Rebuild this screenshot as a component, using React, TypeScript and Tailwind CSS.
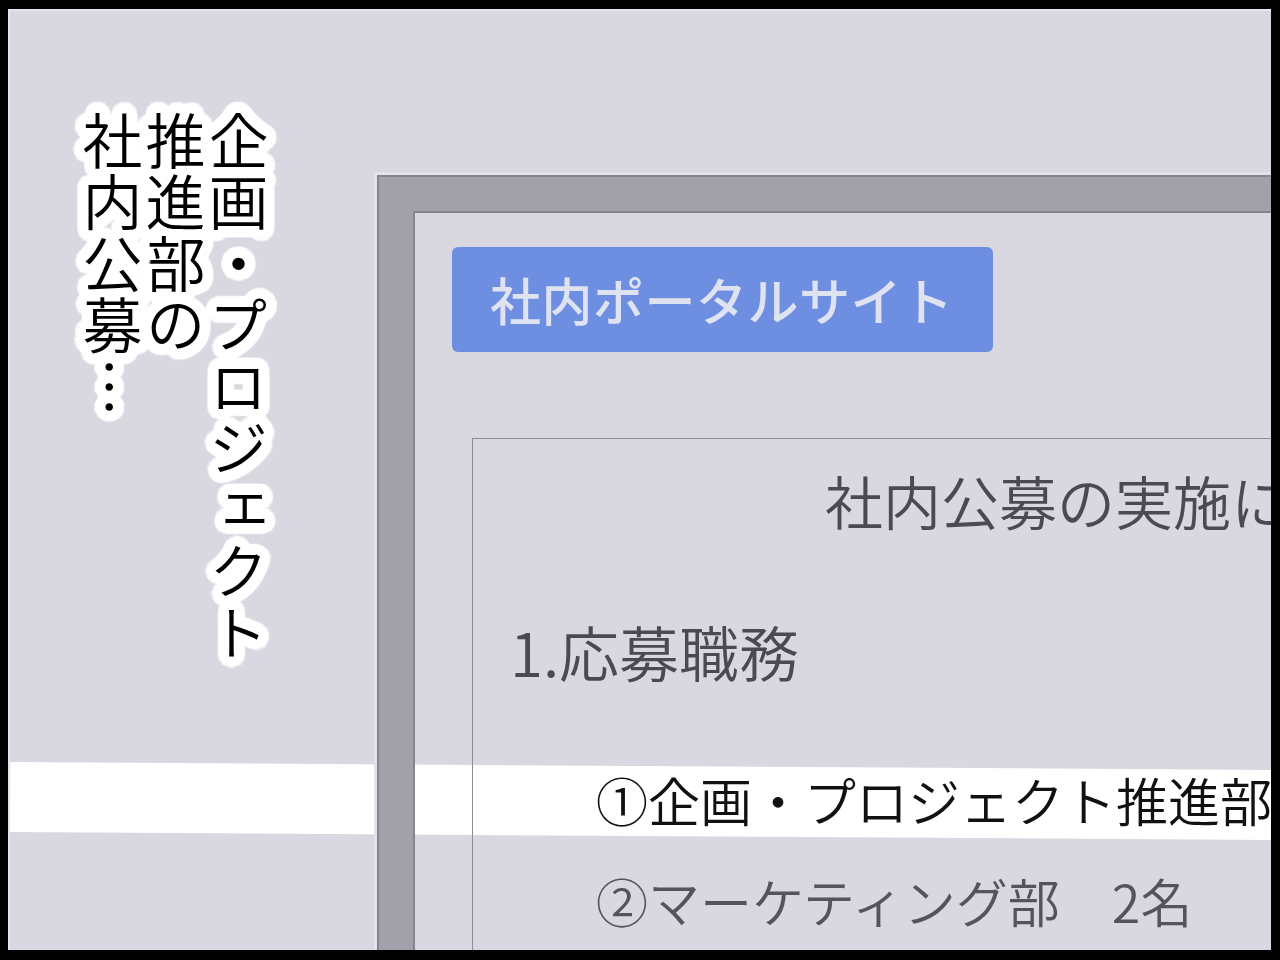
export default function App() {
  return (
    <div className="w-[1280px] h-[960px] bg-black pt-[9px] pl-[8px] pr-[9px] pb-[10px] font-['Noto_Sans_CJK_JP',sans-serif]">
      <div className="relative flex items-start h-full overflow-hidden bg-[#d9d8e1] border-l-2 border-t-2 border-[#e6e5ef]">
        {/* highlight band behind the monitor bezel */}
        <div className="absolute left-0 right-0 top-[755px] h-[70px] bg-white rotate-[0.36deg]" />

        {/* narration, vertical */}
        <p className="relative shrink-0 ml-[71px] mt-[100px] [writing-mode:vertical-rl] text-[60px] leading-[63px] tracking-[1.5px] font-[350] text-black [text-shadow:11px_0_1.5px_#fff,10.6px_2.8px_1.5px_#fff,9.5px_5.5px_1.5px_#fff,7.8px_7.8px_1.5px_#fff,5.5px_9.5px_1.5px_#fff,2.8px_10.6px_1.5px_#fff,0_11px_1.5px_#fff,-2.8px_10.6px_1.5px_#fff,-5.5px_9.5px_1.5px_#fff,-7.8px_7.8px_1.5px_#fff,-9.5px_5.5px_1.5px_#fff,-10.6px_2.8px_1.5px_#fff,-11px_0_1.5px_#fff,-10.6px_-2.8px_1.5px_#fff,-9.5px_-5.5px_1.5px_#fff,-7.8px_-7.8px_1.5px_#fff,-5.5px_-9.5px_1.5px_#fff,-2.8px_-10.6px_1.5px_#fff,0_-11px_1.5px_#fff,2.8px_-10.6px_1.5px_#fff,5.5px_-9.5px_1.5px_#fff,7.8px_-7.8px_1.5px_#fff,9.5px_-5.5px_1.5px_#fff,10.6px_-2.8px_1.5px_#fff,7px_0_0_#fff,6.1px_3.5px_0_#fff,3.5px_6.1px_0_#fff,0_7px_0_#fff,-3.5px_6.1px_0_#fff,-6.1px_3.5px_0_#fff,-7px_0_0_#fff,-6.1px_-3.5px_0_#fff,-3.5px_-6.1px_0_#fff,0_-7px_0_#fff,3.5px_-6.1px_0_#fff,6.1px_-3.5px_0_#fff,3.5px_0_0_#fff,2.5px_2.5px_0_#fff,0_3.5px_0_#fff,-2.5px_2.5px_0_#fff,-3.5px_0_0_#fff,-2.5px_-2.5px_0_#fff,0_-3.5px_0_#fff,2.5px_-2.5px_0_#fff]">
          企画・プロジェクト
          <br />
          推進部の
          <br />
          社内公募…
        </p>

        {/* monitor */}
        <div className="relative shrink-0 ml-[107px] mt-[164px] w-[1000px] h-[900px] shadow-[0_0_0_3px_#e4e3ec] border-2 border-[#86858e]">
          <div className="h-full border-[34px] border-[#a2a1aa]">
            <div className="h-full border-l-2 border-t-2 border-[#86858e] pl-[37px] pt-[34px]">
              <div className="w-[541px] h-[105px] rounded-[6px] bg-[#6e8fe1] flex items-center pl-[38px] text-[51px] font-medium leading-none text-[#dfe2f0] tracking-[0.5px]">
                社内ポータルサイト
              </div>

              <div className="ml-[20px] mt-[86px] border-l border-t border-[#8d8c94] pt-[32px] pb-[40px] font-[350]">
                <p className="pl-[352px] text-[58px] leading-none text-[#4b4a53] whitespace-nowrap">
                  社内公募の実施について
                </p>
                <p className="pl-[37px] mt-[92px] text-[60px] leading-none text-[#4b4a53] whitespace-nowrap">
                  1.応募職務
                </p>
                <p className="pl-[123px] mt-[93px] text-[52px] leading-none text-[#111] whitespace-nowrap">
                  ①企画・プロジェクト推進部
                </p>
                <p className="pl-[123px] mt-[49px] text-[52px] leading-none text-[#55545d] whitespace-nowrap">
                  ②マーケティング部　2名
                </p>
              </div>
            </div>
          </div>
        </div>
      </div>
    </div>
  );
}
